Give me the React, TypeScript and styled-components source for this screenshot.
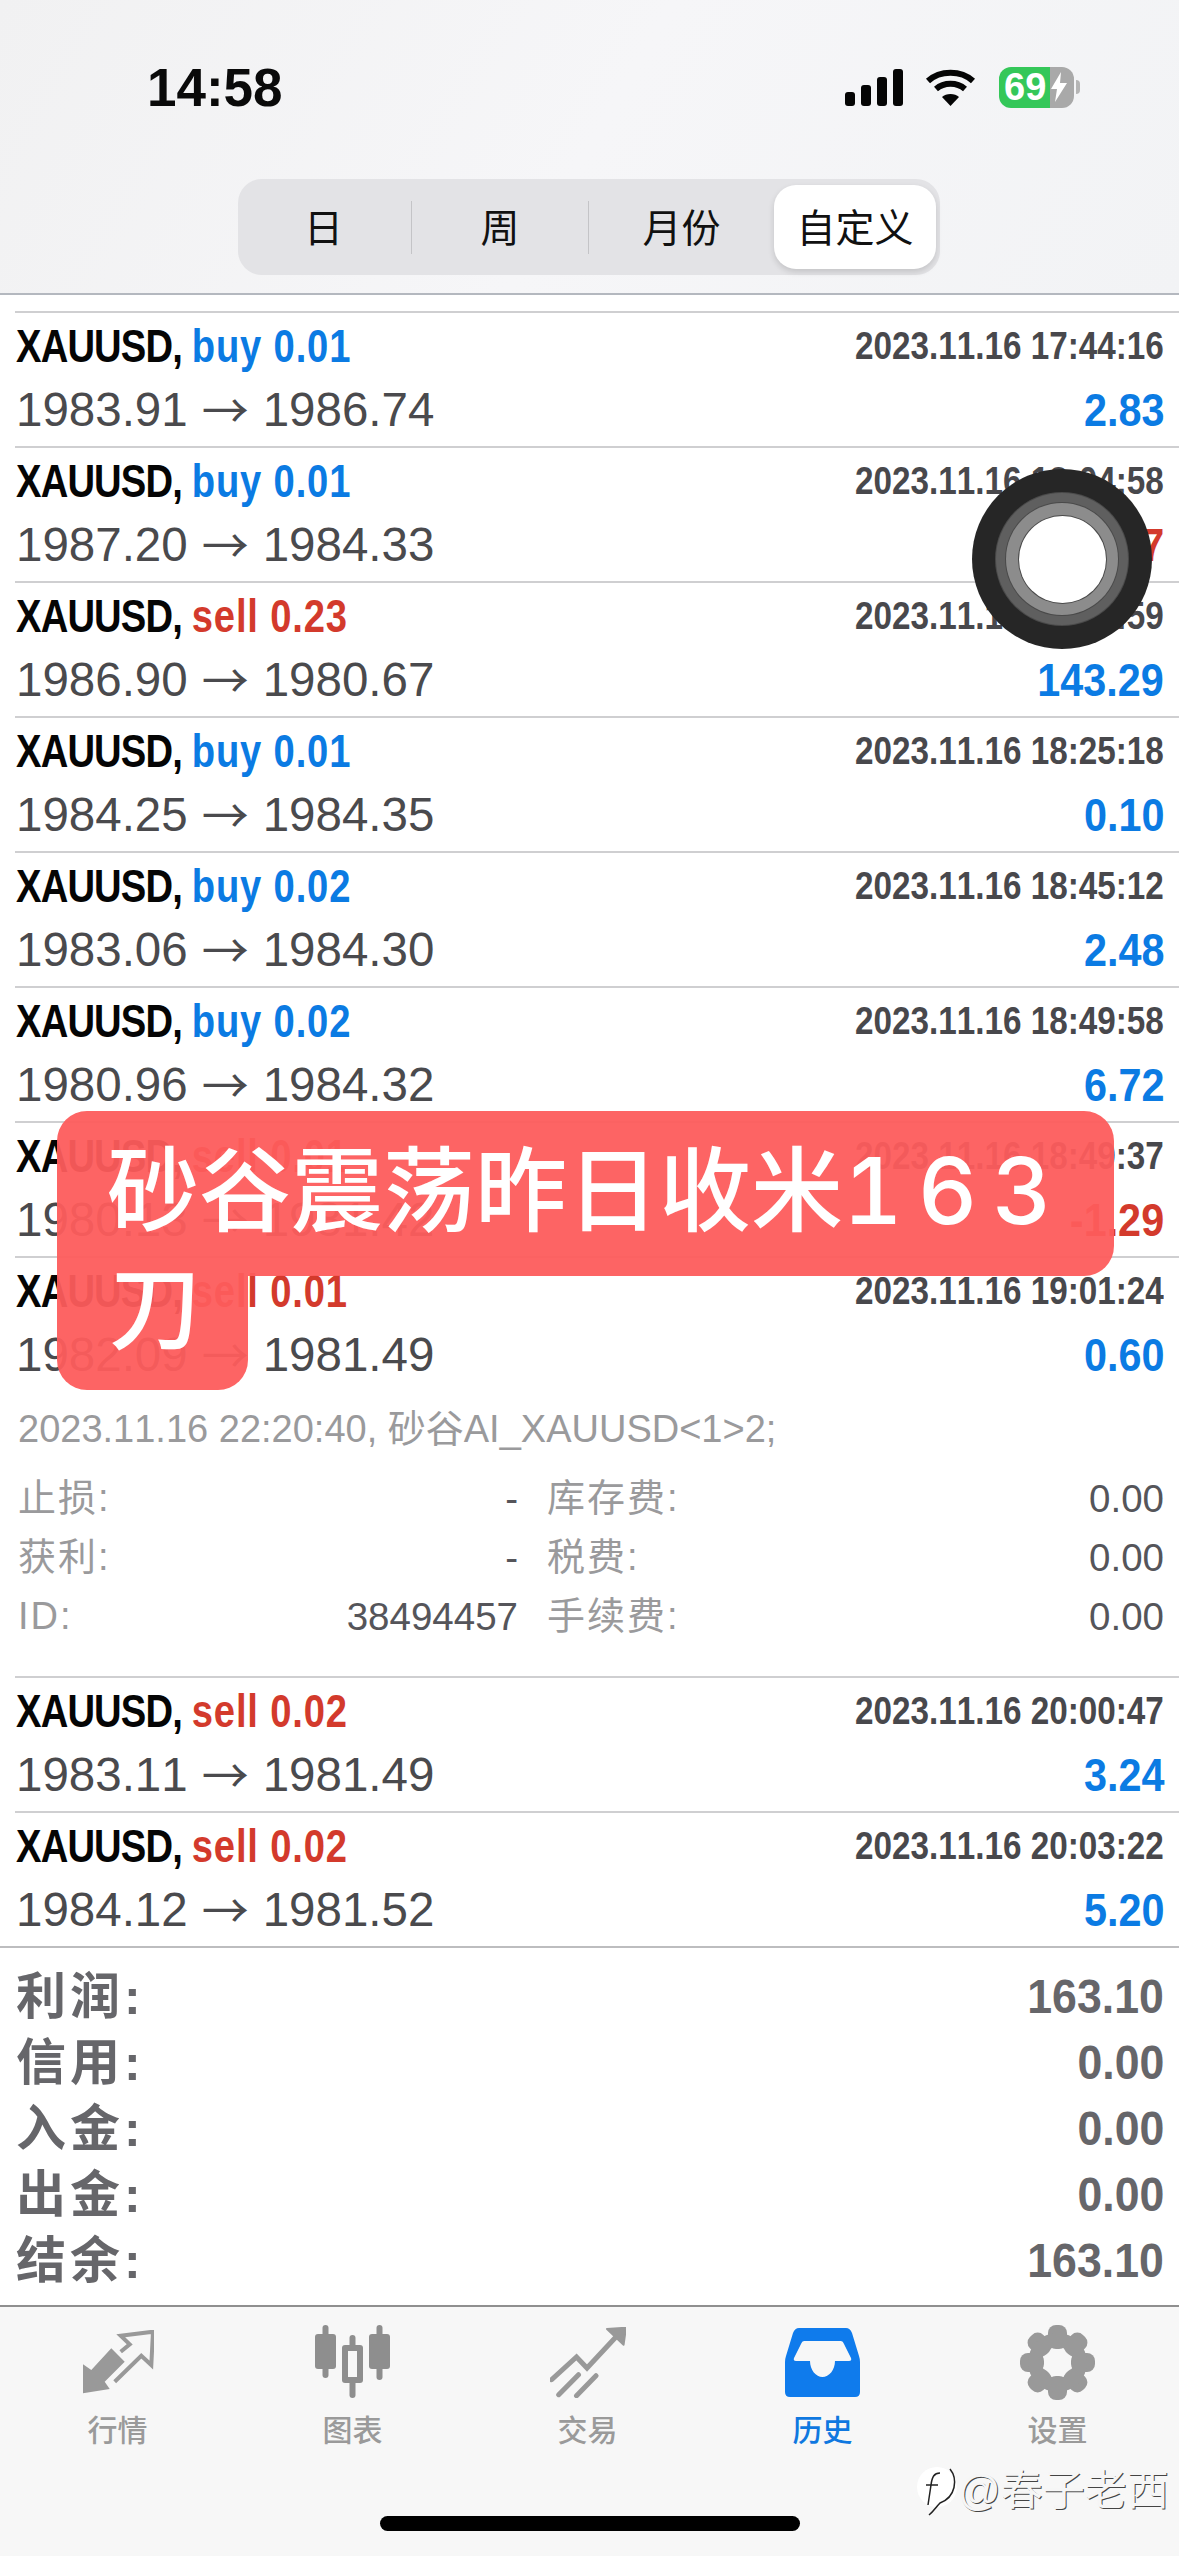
import React from "react";
import styled, { createGlobalStyle } from "styled-components";

const Global = createGlobalStyle`
  html, body { margin: 0; padding: 0; background: #fff; }
  body { font-family: "Liberation Sans", "Noto Sans CJK SC", sans-serif; font-kerning: none; }
`;

const Page = styled.div`
  position: relative;
  width: 1179px;
  height: 2556px;
  overflow: hidden;
  background: #fff;
  display: flex;
  flex-direction: column;
`;

const Header = styled.header`
  height: 293px;
  box-sizing: content-box;
  border-bottom: 2px solid #b4b8bf;
  background: linear-gradient(120deg, #f1f1f2 0%, #f6f6f8 50%, #f2f3f5 100%);
  display: flex;
  flex-direction: column;
  flex: none;
`;

const StatusBar = styled.div`
  height: 112px;
  padding: 62px 99px 0 147px;
  box-sizing: border-box;
  display: flex;
  justify-content: space-between;
  align-items: flex-start;
`;

const Clock = styled.div`
  font-size: 53px;
  font-weight: 700;
  line-height: 52px;
  color: #0a0a0a;
`;

const StatusIcons = styled.div`
  display: flex;
  align-items: center;
  height: 50px;
`;

const Battery = styled.div`
  width: 75px;
  height: 41px;
  margin-left: 23px;
  border-radius: 12px;
  background: linear-gradient(to right, #34c759 68%, #a9a9a9 68%);
  color: #fff;
  font-size: 38px;
  font-weight: 700;
  line-height: 41px;
  display: flex;
  align-items: center;
  padding-left: 5px;
  box-sizing: border-box;
`;

const BatteryNub = styled.div`
  width: 4px;
  height: 14px;
  margin-left: 2px;
  border-radius: 0 4px 4px 0;
  background: #b5b5b5;
`;

const SegmentWrap = styled.div`
  display: flex;
  padding-left: 238px;
  margin-top: 67px;
`;

const Segment = styled.div`
  width: 702px;
  height: 96px;
  box-sizing: border-box;
  padding: 6px 4px 6px 6px;
  border-radius: 24px;
  background: #e3e3e6;
  display: flex;
  align-items: center;
`;

const SegmentItem = styled.div<{ $w: number; $active?: boolean; $inset?: number }>`
  width: ${(p) => p.$w}px;
  height: 84px;
  flex: none;
  box-sizing: border-box;
  padding: 0 ${(p) => p.$inset ?? 0}px 5px 0;
  display: flex;
  align-items: center;
  justify-content: center;
  font-size: 39px;
  color: #111;
  border-radius: 22px;
  background: ${(p) => (p.$active ? "#fff" : "transparent")};
  box-shadow: ${(p) => (p.$active ? "0 3px 6px rgba(0,0,0,.14)" : "none")};
`;

const SegmentDivider = styled.div`
  width: 1px;
  height: 53px;
  flex: none;
  background: #c4c4c7;
`;

const List = styled.main`
  padding-top: 16px;
  flex: none;
`;

const Row = styled.section`
  margin-left: 15px;
  border-top: 2px solid #cfcfd1;
  padding: 3px 15px 6px 1px;
  height: 135px;
  box-sizing: border-box;
  display: grid;
  grid-template-rows: 60px 60px;
  row-gap: 4px;
`;

const Line = styled.div`
  display: flex;
  justify-content: space-between;
  align-items: center;
  line-height: 60px;
  white-space: nowrap;
`;

const Trade = styled.span`
  display: inline-block;
  font-size: 46px;
  font-weight: 700;
  color: #050505;
  transform: scaleX(0.83);
  transform-origin: left center;
`;

const Symbol = styled.span`
  letter-spacing: -1px;
`;

const Side = styled.span<{ $sell?: boolean }>`
  letter-spacing: 1px;
  color: ${(p) => (p.$sell ? "#d33a2c" : "#0b7be3")};
`;

const Stamp = styled.span`
  display: inline-block;
  font-size: 38px;
  font-weight: 700;
  color: #48484c;
  transform: scaleX(0.875);
  transform-origin: right center;
`;

const Prices = styled.span`
  font-size: 47.5px;
  color: #4a4a4d;
  display: inline-flex;
  align-items: center;
`;

const Arrow = styled.span`
  font-family: "Noto Sans CJK SC", sans-serif;
  font-size: 47px;
  line-height: 60px;
  margin: 0 14px 0 14px;
  padding-bottom: 4px;
`;

const Profit = styled.span<{ $loss?: boolean }>`
  display: inline-block;
  font-size: 47px;
  font-weight: 700;
  color: ${(p) => (p.$loss ? "#d33a2c" : "#0b7be3")};
  transform: scaleX(0.88);
  transform-origin: right center;
`;

const Detail = styled.div`
  padding: 8px 15px 30px 18px;
  height: 285px;
  box-sizing: border-box;
`;

const Note = styled.div`
  height: 60px;
  line-height: 60px;
  font-size: 38px;
  color: #9a9a9c;
  white-space: nowrap;
  margin-bottom: 10px;
`;

const DetailGrid = styled.div`
  display: grid;
  grid-template-columns: 500px 617px;
  column-gap: 29px;
  grid-auto-rows: 59px;
`;

const DetailCell = styled.div`
  display: flex;
  justify-content: space-between;
  align-items: center;
  font-size: 38px;
`;

const DetailLabel = styled.span<{ $latin?: boolean }>`
  color: #9a9a9c;
  letter-spacing: 2px;
  margin-bottom: ${(p) => (p.$latin ? 0 : 9)}px;
`;

const DetailValue = styled.span`
  color: #55555a;
  font-size: 38.5px;
`;

const Summary = styled.div`
  border-top: 2px solid #bdbdbf;
  padding: 15px 15px 12px 16px;
`;

const SummaryRow = styled.div`
  height: 66px;
  display: flex;
  justify-content: space-between;
  align-items: center;
  font-weight: 700;
  color: #66666a;
`;

const SummaryLabel = styled.span`
  font-size: 50px;
  letter-spacing: 4px;
  margin-bottom: 9px;
`;

const SummaryValue = styled.span`
  display: inline-block;
  transform: scaleX(0.93);
  transform-origin: right center;
  font-size: 48px;
`;

const TabBar = styled.nav`
  flex: 1;
  border-top: 2px solid #8f8f8f;
  background: #f7f7f7;
  padding-top: 17px;
  display: flex;
  flex-direction: column;
`;

const Tabs = styled.div`
  display: grid;
  grid-template-columns: repeat(5, 235px);
`;

const Tab = styled.div<{ $active?: boolean }>`
  display: flex;
  flex-direction: column;
  align-items: center;
  color: ${(p) => (p.$active ? "#0f78e0" : "#9a9a9a")};
  font-size: 30px;
  font-weight: 500;
`;

const TabIcon = styled.div`
  height: 76px;
  display: flex;
  align-items: center;
  justify-content: center;
  margin-bottom: 11px;
`;

const TabLabel = styled.div`
  line-height: 40px;
`;

const HomeIndicator = styled.div`
  width: 420px;
  height: 15px;
  border-radius: 8px;
  background: #000;
  margin: 65px 0 0 380px;
`;

const Watermark = styled.div`
  position: absolute;
  left: 916px;
  top: 2465px;
  display: flex;
  align-items: center;
  font-size: 42px;
  line-height: 52px;
  color: #f6f6f6;
  text-shadow: 1px 1px 0 #444;
  white-space: nowrap;
`;

const Banner = styled.div`
  position: absolute;
  left: 57px;
  top: 1111px;
  display: flex;
  flex-direction: column;
  align-items: flex-start;
  color: #fff;
  font-family: Inter, "Noto Sans CJK SC", sans-serif;
  font-size: 92px;
  font-weight: 500;
`;

const BannerFirst = styled.div`
  width: 1057px;
  height: 165px;
  box-sizing: border-box;
  padding: 0 0 0 50px;
  line-height: 160px;
  white-space: nowrap;
  background: rgba(253, 92, 92, 0.95);
  border-radius: 30px 30px 30px 0;
`;

const BannerDigits = styled.span`
  letter-spacing: 15px;
  font-variant-numeric: tabular-nums;
`;

const BannerSecond = styled.div`
  width: 191px;
  height: 114px;
  box-sizing: border-box;
  padding-left: 52px;
  line-height: 66px;
  background: rgba(253, 92, 92, 0.95);
  border-radius: 0 0 30px 30px;
`;

const Assistive = styled.div`
  position: absolute;
  left: 972px;
  top: 469px;
  width: 180px;
  height: 180px;
  border-radius: 50%;
  background: #262626;
  display: flex;
  align-items: center;
  justify-content: center;
`;

const Ring = styled.div<{ $size: number; $color: string }>`
  width: ${(p) => p.$size}px;
  height: ${(p) => p.$size}px;
  border-radius: 50%;
  background: ${(p) => p.$color};
  box-shadow: 0 0 0 1px #4a4a4a;
  display: flex;
  align-items: center;
  justify-content: center;
`;

type T = { side: "buy" | "sell"; lot: string; time: string; open: string; close: string; profit: string };

const before: T[] = [
  { side: "buy", lot: "0.01", time: "2023.11.16 17:44:16", open: "1983.91", close: "1986.74", profit: "2.83" },
  { side: "buy", lot: "0.01", time: "2023.11.16 18:04:58", open: "1987.20", close: "1984.33", profit: "-2.87" },
  { side: "sell", lot: "0.23", time: "2023.11.16 18:12:59", open: "1986.90", close: "1980.67", profit: "143.29" },
  { side: "buy", lot: "0.01", time: "2023.11.16 18:25:18", open: "1984.25", close: "1984.35", profit: "0.10" },
  { side: "buy", lot: "0.02", time: "2023.11.16 18:45:12", open: "1983.06", close: "1984.30", profit: "2.48" },
  { side: "buy", lot: "0.02", time: "2023.11.16 18:49:58", open: "1980.96", close: "1984.32", profit: "6.72" },
  { side: "sell", lot: "0.01", time: "2023.11.16 18:49:37", open: "1980.13", close: "1981.42", profit: "-1.29" },
  { side: "sell", lot: "0.01", time: "2023.11.16 19:01:24", open: "1982.09", close: "1981.49", profit: "0.60" },
];

const after: T[] = [
  { side: "sell", lot: "0.02", time: "2023.11.16 20:00:47", open: "1983.11", close: "1981.49", profit: "3.24" },
  { side: "sell", lot: "0.02", time: "2023.11.16 20:03:22", open: "1984.12", close: "1981.52", profit: "5.20" },
];

const TradeRow = ({ t }: { t: T }) => (
  <Row>
    <Line>
      <Trade>
        <Symbol>XAUUSD, </Symbol>
        <Side $sell={t.side === "sell"}>{t.side} {t.lot}</Side>
      </Trade>
      <Stamp>{t.time}</Stamp>
    </Line>
    <Line>
      <Prices>
        {t.open}
        <Arrow>→</Arrow>
        {t.close}
      </Prices>
      <Profit $loss={t.profit.startsWith("-")}>{t.profit}</Profit>
    </Line>
  </Row>
);

const Signal = () => (
  <svg width="58" height="37" viewBox="0 0 58 37" fill="#050505">
    <rect x="0" y="23" width="10" height="14" rx="3" />
    <rect x="16" y="16" width="10" height="21" rx="3" />
    <rect x="32" y="8" width="10" height="29" rx="3" />
    <rect x="48" y="0" width="10" height="37" rx="3" />
  </svg>
);

const Wifi = () => (
  <svg width="51" height="37" viewBox="0 0 51 37" fill="none" stroke="#050505" strokeWidth="6" style={{ marginLeft: 22 }}>
    <path d="M3 12 C15 1 36 1 48 12" />
    <path d="M11 20 C19 13 32 13 40 20" />
    <path d="M25.5 37 L17 28 C21 24 30 24 34 28 Z" fill="#050505" stroke="none" />
  </svg>
);

const Bolt = () => (
  <svg width="16" height="30" viewBox="0 0 16 30" fill="#fff" style={{ marginLeft: 5 }}>
    <path d="M10 0 L0 17 H6 L4 30 L16 11 H9 Z" />
  </svg>
);

const MarketIcon = () => (
  <svg width="72" height="64" viewBox="0 0 72 64">
    <path d="M1 34.3 L9.3 40 L29.3 18.3 L42.7 31.7 L22.7 51.7 L27.7 59 L1 63.3 Z" fill="#999" />
    <path d="M32.7 51.7 L59.3 25.7 L69.3 35 L71 1.7 L38.7 5.7 L47.7 14.3 L38.7 21.7" fill="none" stroke="#999" strokeWidth="4" />
  </svg>
);

const ChartIcon = () => (
  <svg width="75" height="74" viewBox="0 0 75 74" fill="#8e8e8e">
    <rect x="7.5" y="0" width="6" height="53" rx="3" />
    <rect x="0" y="9" width="21" height="35" rx="3" />
    <rect x="34.5" y="10" width="6" height="63" rx="3" />
    <rect x="27" y="20" width="21" height="38" rx="3" />
    <rect x="33" y="26" width="9" height="26" fill="#f7f7f7" />
    <rect x="61.5" y="0" width="6" height="55" rx="3" />
    <rect x="54" y="9" width="21" height="35" rx="3" />
  </svg>
);

const TradeIcon = () => (
  <svg width="76" height="71" viewBox="0 0 76 71" fill="none" stroke="#999" strokeWidth="5" strokeLinecap="round">
    <path d="M1.6 52.7 L26.5 30 L37 41 L68 7.7" strokeLinejoin="miter" />
    <path d="M28.5 47.7 L8.7 67.7" />
    <path d="M46 48.7 L26.5 68.7" />
    <path d="M57 2 L76 0.7 L73.6 17.7 Z" fill="#999" stroke="#999" strokeWidth="2" strokeLinejoin="round" />
  </svg>
);

const HistoryIcon = () => (
  <svg width="75" height="69" viewBox="0 0 75 69">
    <path d="M14 0 H61 Q65 0 67 5 L74 28 Q75 31 75 34 V64 Q75 69 70 69 H5 Q0 69 0 64 V34 Q0 31 1 28 L8 5 Q10 0 14 0 Z" fill="#0f7bec" />
    <path d="M19 13 H56 Q58 13 59 16 L66 30 Q67 33 64 33 H50 C50 42 44 49 37.5 49 C31 49 25 42 25 33 H11 Q8 33 9 30 L16 16 Q17 13 19 13 Z" fill="#f7f7f7" />
  </svg>
);

const GearIcon = () => (
  <svg width="75" height="75" viewBox="0 0 75 75" fill="#999">
    {[0, 45, 90, 135, 180, 225, 270, 315].map((a) => (
      <rect key={a} x="28" y="0" width="19" height="24" rx="8" transform={`rotate(${a} 37.5 37.5)`} />
    ))}
    <path fillRule="evenodd" d="M37.5 8 A29.5 29.5 0 1 0 37.5 67 A29.5 29.5 0 1 0 37.5 8 Z M37.5 22 A15.5 15.5 0 1 1 37.5 53 A15.5 15.5 0 1 1 37.5 22 Z" />
  </svg>
);

const WatermarkLogo = () => (
  <svg width="42" height="52" viewBox="0 0 42 52" fill="none">
    <circle cx="21" cy="22" r="20" fill="#fff" />
    <path d="M34 4 C42 14 40 32 24 38 C20 42 18 46 13 50" stroke="#222" strokeWidth="1.5" />
    <path d="M24 8 C18 8 16 12 15 20 L12 40 M10 20 H22" stroke="#222" strokeWidth="1.5" />
  </svg>
);

const tabs = [
  { label: "行情", icon: <MarketIcon /> },
  { label: "图表", icon: <ChartIcon /> },
  { label: "交易", icon: <TradeIcon /> },
  { label: "历史", icon: <HistoryIcon />, active: true },
  { label: "设置", icon: <GearIcon /> },
];

const detail = [
  ["止损:", "-", "库存费:", "0.00"],
  ["获利:", "-", "税费:", "0.00"],
  ["ID:", "38494457", "手续费:", "0.00"],
];

const summary = [
  ["利润:", "163.10"],
  ["信用:", "0.00"],
  ["入金:", "0.00"],
  ["出金:", "0.00"],
  ["结余:", "163.10"],
];

export default function App() {
  return (
    <Page>
      <Global />
      <Header>
        <StatusBar>
          <Clock>14:58</Clock>
          <StatusIcons>
            <Signal />
            <Wifi />
            <Battery>
              69
              <Bolt />
            </Battery>
            <BatteryNub />
          </StatusIcons>
        </StatusBar>
        <SegmentWrap>
          <Segment>
            <SegmentItem $w={167} $inset={8}>日</SegmentItem>
            <SegmentDivider />
            <SegmentItem $w={176}>周</SegmentItem>
            <SegmentDivider />
            <SegmentItem $w={185}>月份</SegmentItem>
            <SegmentItem $w={162} $active>自定义</SegmentItem>
          </Segment>
        </SegmentWrap>
      </Header>
      <List>
        {before.map((t) => (
          <TradeRow key={t.time} t={t} />
        ))}
        <Detail>
          <Note>2023.11.16 22:20:40, 砂谷AI_XAUUSD&lt;1&gt;2;</Note>
          <DetailGrid>
            {detail.map((d) => (
              <React.Fragment key={d[0]}>
                <DetailCell>
                  <DetailLabel $latin={d[0] === "ID:"}>{d[0]}</DetailLabel>
                  <DetailValue>{d[1]}</DetailValue>
                </DetailCell>
                <DetailCell>
                  <DetailLabel>{d[2]}</DetailLabel>
                  <DetailValue>{d[3]}</DetailValue>
                </DetailCell>
              </React.Fragment>
            ))}
          </DetailGrid>
        </Detail>
        {after.map((t) => (
          <TradeRow key={t.time} t={t} />
        ))}
        <Summary>
          {summary.map((s) => (
            <SummaryRow key={s[0]}>
              <SummaryLabel>{s[0]}</SummaryLabel>
              <SummaryValue>{s[1]}</SummaryValue>
            </SummaryRow>
          ))}
        </Summary>
      </List>
      <TabBar>
        <Tabs>
          {tabs.map((t) => (
            <Tab key={t.label} $active={t.active}>
              <TabIcon>{t.icon}</TabIcon>
              <TabLabel>{t.label}</TabLabel>
            </Tab>
          ))}
        </Tabs>
        <HomeIndicator />
      </TabBar>
      <Banner>
        <BannerFirst>砂谷震荡昨日收米<BannerDigits>163</BannerDigits></BannerFirst>
        <BannerSecond>刀</BannerSecond>
      </Banner>
      <Assistive>
        <Ring $size={132} $color="#5f5f5f">
          <Ring $size={112} $color="#8c8c8c">
            <Ring $size={87} $color="#ffffff" />
          </Ring>
        </Ring>
      </Assistive>
      <Watermark>
        <WatermarkLogo />
        @春子老西
      </Watermark>
    </Page>
  );
}
